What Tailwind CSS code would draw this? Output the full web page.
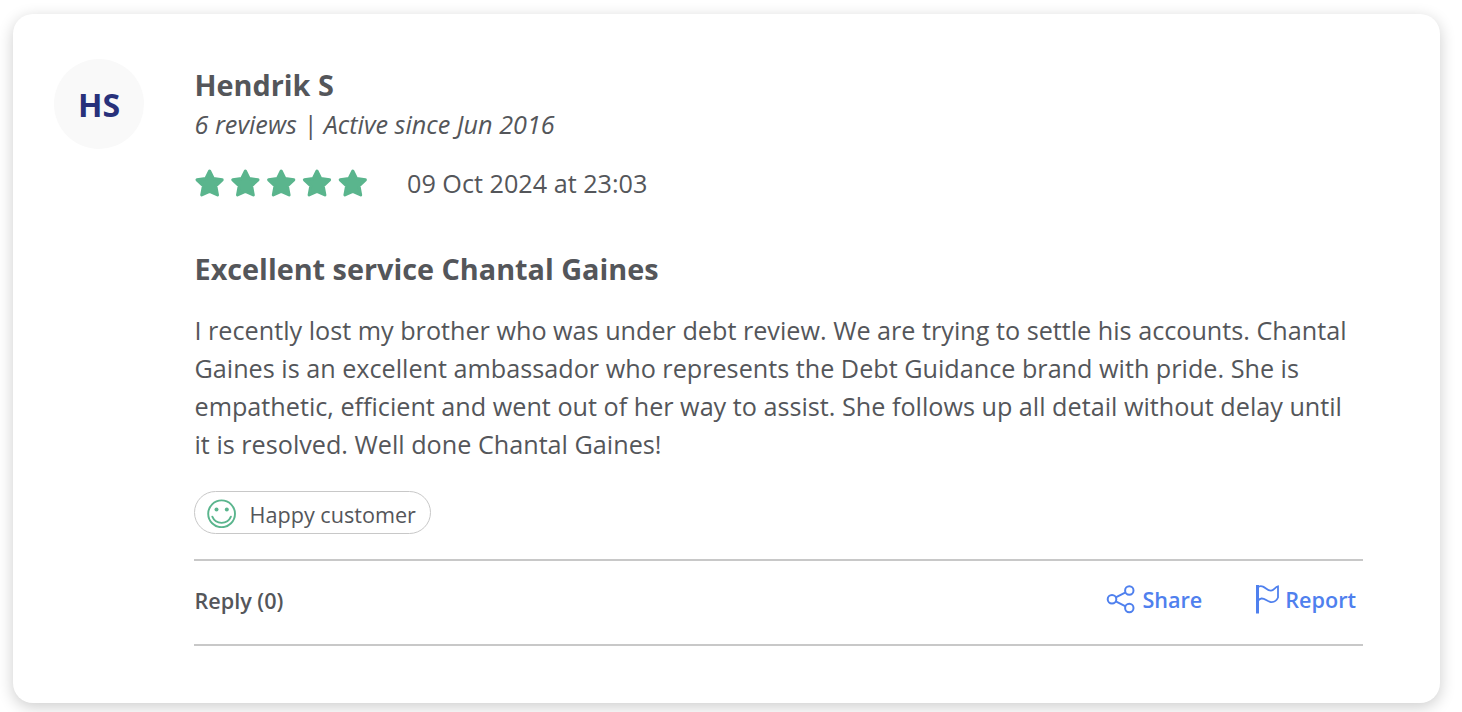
<!DOCTYPE html>
<html lang="en">
<head>
  <meta charset="UTF-8" />
  <meta name="viewport" content="width=device-width, initial-scale=1.0">
  <title>Customer Review</title>
  <script src="https://cdn.jsdelivr.net/npm/@tailwindcss/browser@4"></script>
</head>
<body class="bg-white h-screen overflow-hidden pt-[14px] pl-[13px] font-['Open_Sans',sans-serif] text-[#54565a]">

  <!-- Review card -->
  <div class="flex w-[1427px] h-[689px] rounded-[20px] bg-white pl-[41px] pt-[45px] shadow-[0_4px_16px_rgba(0,0,0,0.2)]">
    <div class="flex shrink-0 items-center justify-center size-[90px] rounded-full bg-[#f9f9f9] text-[32px] font-bold text-[#28317b] pt-px">HS</div>

    <div class="ml-[50px] w-[1169px]">
      <h2 class="mt-[7px] h-[38px] pl-[0.5px] text-[28.8px] leading-[38px] font-bold">Hendrik S</h2>
      <p class="mt-px h-[38px] pl-[0.5px] text-[25.2px] leading-[38px] italic">6 reviews | Active since Jun 2016</p>

      <!-- Rating -->
      <div class="mt-[22px] flex h-[38px] items-center">
        <svg class="w-[174px] h-[30px] shrink-0 mt-[-3px]" viewBox="0 0 174 30" fill="#5ab58d" stroke="#5ab58d" stroke-width="3" stroke-linejoin="round">
          <defs>
            <path id="star" d="M15.6 3L19.3 10.4L28.200 11.800L21.800 17.800L23.500 27L15.600 23.400L7.700 27L9.400 17.800L3 11.800L11.900 10.400Z" />
          </defs>
          <use href="#star" />
          <use href="#star" x="35.8" />
          <use href="#star" x="71.6" />
          <use href="#star" x="107.4" />
          <use href="#star" x="143.2" />
        </svg>
        <span class="ml-[39px] text-[25.2px]">09 Oct 2024 at 23:03</span>
      </div>

      <h3 class="mt-[47px] h-[38px] pl-[0.5px] text-[28.8px] leading-[38px] font-bold">Excellent service Chantal Gaines</h3>
      <p class="mt-[23px] pl-[0.5px] text-[25.2px] leading-[38px] whitespace-nowrap">
        I recently lost my brother who was under debt review. We are trying to settle his accounts. Chantal<br>
        Gaines is an excellent ambassador who represents the Debt Guidance brand with pride. She is<br>
        empathetic, efficient and went out of her way to assist. She follows up all detail without delay until<br>
        it is resolved. Well done Chantal Gaines!
      </p>

      <div class="mt-[28px] flex w-[237px] h-[43px] items-center rounded-full border border-[#c8c8c8] pl-[12px]">
        <svg class="size-[30px] shrink-0" viewBox="0 0 30 30" fill="none" stroke="#5ab58d" stroke-width="1.9" stroke-linecap="round">
          <circle cx="14.6" cy="15.8" r="13.4" />
          <path d="M5.3 18.7c3.5 8.2 15.1 8.2 18.6 0" />
          <circle cx="9.5" cy="11.4" r="2" fill="#5ab58d" stroke="none" />
          <circle cx="19.8" cy="11.4" r="2" fill="#5ab58d" stroke="none" />
        </svg>
        <span class="ml-[12.6px] mt-[5px] text-[21.6px]">Happy customer</span>
      </div>

      <!-- Actions -->
      <div class="mt-[25px] flex h-[87px] items-center border-y-2 border-[#c8c8c8] pb-[2px]">
        <span class="pl-[0.5px] text-[21.6px] font-semibold">Reply (0)</span>
        <button class="ml-auto mb-[2px] flex items-center text-[21.6px] font-semibold text-[#4f80ee]">
          <svg class="mr-[6px] mb-[2px] size-[30px]" viewBox="0 0 30 30" fill="none" stroke="currentColor" stroke-width="2">
            <circle cx="6" cy="15.3" r="4.3" />
            <circle cx="23.3" cy="6.5" r="4.2" />
            <circle cx="23.3" cy="24" r="4.2" />
            <path d="M9.8 13.3l9.8-5M9.8 17.3l9.8 5" />
          </svg>
          Share
        </button>
        <button class="ml-[52px] mr-[7px] mb-[2px] flex items-center text-[21.6px] font-semibold text-[#4f80ee]">
          <svg class="mr-[5px] mb-[2px] w-[26px] h-[30px]" viewBox="0 0 26 30" fill="none" stroke="currentColor">
            <path stroke-width="3" d="M3.5 1v28.5" />
            <path stroke-width="1.8" d="M3.5 4C5 2 7 1.8 9 2.6C12 3.8 13.5 6.8 17 6.6C20 6.4 21 3 24 2.4V13.5C22.5 17 20 18.5 16.5 18C12.5 17.3 11 14.2 7.5 14.5C5.5 14.7 4.3 16 3.5 17.5" />
          </svg>
          Report
        </button>
      </div>
    </div>
  </div>

</body>
</html>
